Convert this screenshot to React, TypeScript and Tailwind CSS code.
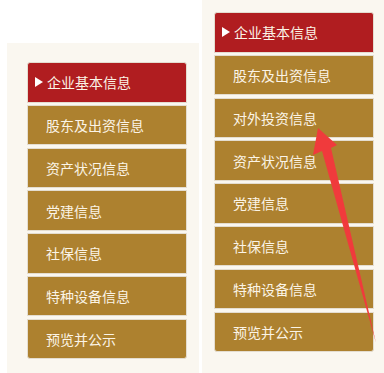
import React from 'react'

const leftItems = ['企业基本信息', '股东及出资信息', '资产状况信息', '党建信息', '社保信息', '特种设备信息', '预览并公示']
const rightItems = ['企业基本信息', '股东及出资信息', '对外投资信息', '资产状况信息', '党建信息', '社保信息', '特种设备信息', '预览并公示']

function Menu({ items }: { items: string[] }) {
  return (
    <div className="flex flex-col gap-[2.3px] w-[160px]">
      {items.map((label, i) => {
        const active = i === 0
        const first = i === 0
        const last = i === items.length - 1
        return (
          <div
            key={label}
            className={
              'flex items-center h-[40.5px] border border-[#e4ddd0] text-[14px] text-[#fbf4e6] ' +
              (active ? 'bg-[#b01d20] pl-[7px] ' : 'bg-[#ad812f] pl-[18px] ') +
              (first ? 'rounded-t-[3px] ' : '') +
              (last ? 'rounded-b-[3px] ' : '')
            }
          >
            {active && (
              <svg width="8" height="10" viewBox="0 0 8 10" className="mr-[4px] shrink-0">
                <path d="M0 0 L8 5 L0 10 Z" fill="#ffffff" />
              </svg>
            )}
            <span className="leading-none">{label}</span>
          </div>
        )
      })}
    </div>
  )
}

export default function App() {
  return (
    <div
      className="relative flex w-[384px] h-[373px] bg-white overflow-hidden"
      style={{ fontFamily: '"Noto Sans CJK SC", "Noto Sans", sans-serif' }}
    >
      <div className="ml-[7px] mt-[43px] w-[192px] bg-[#faf7f0] pl-[20px] pt-[19px]">
        <Menu items={leftItems} />
      </div>
      <div className="ml-[3px] w-[182px] bg-[#faf7f0] pl-[12px] pt-[12px]">
        <Menu items={rightItems} />
      </div>
      <svg className="absolute left-0 top-0" width="384" height="373" viewBox="0 0 384 373">
        <path d="M318 128 L337 145 L331 148 L376 343 L322 151 L313 155 Z" fill="#f03a3c" />
      </svg>
    </div>
  )
}
